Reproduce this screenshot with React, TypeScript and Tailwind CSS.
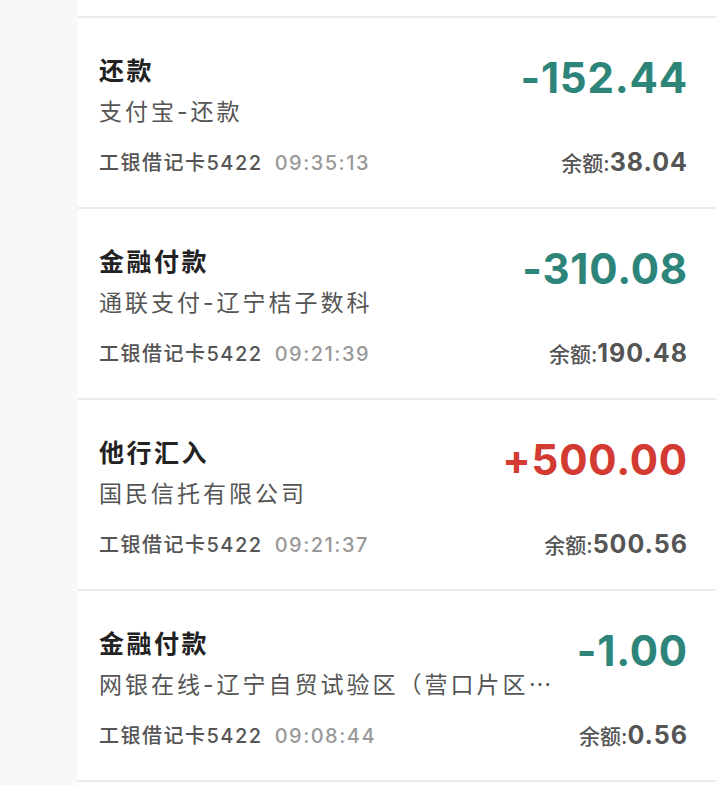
import React from "react";

type Item = {
  title: string;
  sub: string;
  time: string;
  amount: string;
  positive?: boolean;
  balance: string;
  ellipsis?: boolean;
};

const items: Item[] = [
  { title: "还款", sub: "支付宝-还款", time: "09:35:13", amount: "-152.44", balance: "38.04" },
  { title: "金融付款", sub: "通联支付-辽宁桔子数科", time: "09:21:39", amount: "-310.08", balance: "190.48" },
  { title: "他行汇入", sub: "国民信托有限公司", time: "09:21:37", amount: "+500.00", positive: true, balance: "500.56" },
  { title: "金融付款", sub: "网银在线-辽宁自贸试验区（营口片区", ellipsis: true, time: "09:08:44", amount: "-1.00", balance: "0.56" },
];

const font = { fontFamily: 'Inter, "Noto Sans CJK SC", sans-serif' };

function Row({ it }: { it: Item }) {
  return (
    <div className="flex justify-between h-[191px] pl-[21px] pr-[28px] border-b-2 border-[#ececec]">
      <div className="flex flex-col pt-[37px] min-w-0">
        <div className="text-[25px] leading-[32px] font-bold text-[#222222] tracking-[2.5px]">{it.title}</div>
        <div className="mt-[10px] text-[23px] leading-[30px] text-[#555555] tracking-[3px] whitespace-nowrap">
          {it.sub}
          {it.ellipsis && <span className="tracking-normal">⋯</span>}
        </div>
        <div className="mt-[22px] text-[20px] leading-[28px] font-medium tracking-[1.5px] whitespace-nowrap">
          <span className="text-[#555555]">工银借记卡5422</span>
          <span className="ml-[12px] text-[#999999]">{it.time}</span>
        </div>
      </div>
      <div className="flex flex-col items-end pt-[35px] shrink-0">
        <div
          className={
            "text-[42px] leading-[50px] font-bold tracking-[0.8px] " +
            (it.positive ? "text-[#d23a32]" : "text-[#2d8479]")
          }
        >
          {it.amount}
        </div>
        <div className="mt-[43px] leading-[32px] text-[#555555] whitespace-nowrap">
          <span className="text-[21px] font-medium">余额:</span>
          <span className="text-[25px] font-bold tracking-[1px]">{it.balance}</span>
        </div>
      </div>
    </div>
  );
}

export default function App() {
  return (
    <div className="flex w-[716px] h-[785px] bg-white overflow-hidden" style={font}>
      <div className="w-[78px] shrink-0 bg-[#f8f8f8]" />
      <div className="flex-1 flex flex-col bg-white">
        <div className="h-[18px] border-b-2 border-[#ececec]" />
        {items.map((it, i) => (
          <Row key={i} it={it} />
        ))}
      </div>
    </div>
  );
}
